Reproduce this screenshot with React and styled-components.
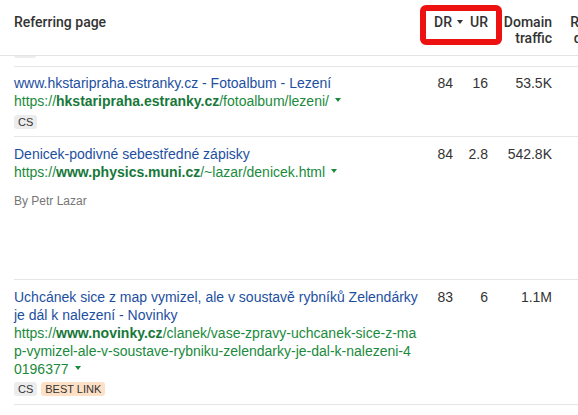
import styled, { createGlobalStyle } from "styled-components"

const Global = createGlobalStyle`
  html, body {
    margin: 0;
    padding: 0;
    background: #fff;
    overflow: hidden;
  }
  body {
    font-family: "Liberation Sans", Arial, sans-serif;
    color: #333;
  }
`

const Page = styled.div`
  position: relative;
  width: 578px;
  height: 415px;
  overflow: hidden;
`

const cols = `405px 34px 35px 64px 76px`

const Header = styled.div`
  display: grid;
  grid-template-columns: ${cols};
  height: 55px;
  padding-left: 14px;
  border-bottom: 1px solid #e4e4e4;
  font-family: Roboto, "Liberation Sans", sans-serif;
  font-weight: 500;
  font-size: 14px;
  line-height: 16px;
  color: #333;
`

const HeadCell = styled.div`
  padding-top: 14px;
  text-align: ${p => (p.$left ? "left" : "right")};
  margin-right: ${p => p.$shift || 0}px;
  white-space: ${p => (p.$nowrap ? "nowrap" : "normal")};
`

const Caret = styled.span`
  display: inline-block;
  width: 0;
  height: 0;
  border-left: 3.5px solid transparent;
  border-right: 3.5px solid transparent;
  border-top: 4px solid ${p => p.$color || "#333"};
  margin-left: ${p => p.$gap || 4}px;
  vertical-align: middle;
  position: relative;
  top: ${p => p.$top || 0}px;
`

const Highlight = styled.div`
  position: absolute;
  left: 420px;
  top: 5px;
  width: 82px;
  height: 40px;
  box-sizing: border-box;
  border: 6px solid #ee1111;
  border-radius: 6px;
`

const Row = styled.div`
  display: grid;
  grid-template-columns: ${cols};
  margin-left: 14px;
  border-bottom: 1px solid #e6e6e6;
  padding: ${p => p.$pad || "7px 0 7px"};
  min-height: ${p => p.$min || 0}px;
  box-sizing: border-box;
  font-size: 14px;
  line-height: 18px;
`

const Stub = styled.div`
  display: flex;
  align-items: flex-start;
  height: 10px;
  margin-left: 14px;
  overflow: hidden;
  border-bottom: 1px solid #e6e6e6;
`

const StubChip = styled.div`
  width: 22px;
  height: 2px;
  border-radius: 0 0 3px 3px;
  background: #ececec;
`

const Cell = styled.div`
  min-width: 0;
`

const Title = styled.a`
  display: block;
  width: 406px;
  color: #1d4f9f;
  text-decoration: none;
`

const Url = styled.div`
  color: #1a8a3c;
  word-break: break-all;
  width: 403px;

  b {
    color: #17783a;
    font-weight: 700;
  }
`

const Byline = styled.div`
  margin-top: 11px;
  font-size: 12px;
  color: #767676;
`

const Tags = styled.div`
  display: flex;
  gap: 4px;
  margin-top: ${p => p.$mt || 5}px;
`

const Chip = styled.span`
  display: inline-block;
  height: 14px;
  line-height: 14px;
  padding: 0 4px;
  border-radius: 3px;
  font-size: 11px;
  color: #333;
  background: ${p => (p.$best ? "#fde0c5" : "#ececec")};
`

const Num = styled.div`
  text-align: right;
  color: #333;
`

const rows = [
  {
    title: "www.hkstaripraha.estranky.cz - Fotoalbum - Lezení",
    domain: "hkstaripraha.estranky.cz",
    path: "/fotoalbum/lezeni/",
    dr: "84",
    ur: "16",
    traffic: "53.5K",
    tags: ["CS"],
    pad: "7px 0 7px",
  },
  {
    title: "Denicek-podivné sebestředné zápisky",
    domain: "www.physics.muni.cz",
    path: "/~lazar/denicek.html",
    dr: "84",
    ur: "2.8",
    traffic: "542.8K",
    byline: "By Petr Lazar",
    pad: "8px 0 8px",
    min: 143,
  },
  {
    title: "Uchcánek sice z map vymizel, ale v soustavě rybníků Zelendárky je dál k nalezení - Novinky",
    domain: "www.novinky.cz",
    path: "/clanek/vase-zpravy-uchcanek-sice-z-map-vymizel-ale-v-soustave-rybniku-zelendarky-je-dal-k-nalezeni-40196377",
    dr: "83",
    ur: "6",
    traffic: "1.1M",
    tags: ["CS", "BEST LINK"],
    tagGap: 4,
    pad: "8px 0 8px",
  },
]

const App = () => {
  return (
    <Page>
      <Global />
      <Header>
        <HeadCell $left>Referring page</HeadCell>
        <HeadCell $shift={-10} $nowrap>
          DR<Caret $gap={5} $top={-1} />
        </HeadCell>
        <HeadCell>UR</HeadCell>
        <HeadCell>Domain traffic</HeadCell>
        <HeadCell>Referring domains</HeadCell>
      </Header>
      <Highlight />
      <Stub>
        <StubChip />
      </Stub>
      {rows.map((r, i) => (
        <Row key={i} $pad={r.pad} $min={r.min}>
          <Cell>
            <Title href="#">{r.title}</Title>
            <Url>
              https://<b>{r.domain}</b>
              {r.path}
              <Caret $color="#1a8a3c" $gap={6} $top={-2} />
            </Url>
            {r.byline && <Byline>{r.byline}</Byline>}
            {r.tags && (
              <Tags $mt={r.tagGap}>
                {r.tags.map(t => (
                  <Chip key={t} $best={t === "BEST LINK"}>{t}</Chip>
                ))}
              </Tags>
            )}
          </Cell>
          <Num>{r.dr}</Num>
          <Num>{r.ur}</Num>
          <Num>{r.traffic}</Num>
          <Num />
        </Row>
      ))}
    </Page>
  )
}

export default App
